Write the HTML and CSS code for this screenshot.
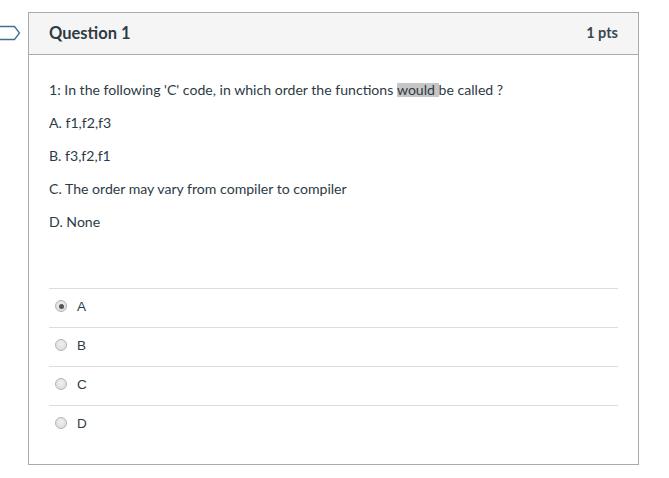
FILE: index.html
```html
<!DOCTYPE html>
<html>
<head>
<meta charset="utf-8">
<link rel="stylesheet" href="styles.css">
</head>
<body>
<svg class="flag" width="22" height="16" viewBox="0 0 22 16"><path d="M-1 1.5 H14.5 L19.5 8 L14.5 14.5 H-1" fill="none" stroke="#3f6f91" stroke-width="1.3"/></svg>
<div class="card">
  <div class="card-header">
    <span class="title">Question 1</span>
    <span class="pts">1 pts</span>
  </div>
  <div class="card-body">
    <p>1: In the following 'C' code, in which order the functions <span class="hl">would&nbsp;</span>be called ?</p>
    <p>A. f1,f2,f3</p>
    <p>B. f3,f2,f1</p>
    <p>C. The order may vary from compiler to compiler</p>
    <p>D. None</p>
  </div>
  <div class="answers">
    <div class="answer"><span class="radio checked"></span><span class="label">A</span></div>
    <div class="answer"><span class="radio"></span><span class="label">B</span></div>
    <div class="answer"><span class="radio"></span><span class="label">C</span></div>
    <div class="answer"><span class="radio"></span><span class="label">D</span></div>
  </div>
</div>
</body>
</html>
```
FILE: styles.css
```css
html, body {
  margin: 0;
  padding: 0;
  background: #fff;
}
body {
  position: relative;
  font-family: Lato, "Liberation Sans", sans-serif;
  color: #2d3b45;
}
.flag {
  position: absolute;
  left: 0;
  top: 25px;
}
.card {
  margin: 12px 0 0 28px;
  width: 609px;
  border: 1px solid #aaaaaa;
  padding-bottom: 20px;
}
.card-header {
  display: flex;
  justify-content: space-between;
  align-items: center;
  height: 41px;
  padding: 0 20px;
  background: #f5f5f5;
  border-bottom: 1px solid #aaaaaa;
}
.title {
  font-size: 16.5px;
  font-weight: 700;
  color: #2d3b45;
  margin-top: -1px;
}
.pts {
  font-size: 14.5px;
  font-weight: 700;
  color: #3a4750;
  margin-top: -3px;
}
.card-body {
  padding: 25px 20px 0 20px;
  font-size: 14.1px;
}
.card-body p {
  margin: 0 0 13px 0;
  line-height: 20px;
}
.card-body p:last-child {
  margin-bottom: 0;
}
.hl {
  background: #c6c6c6;
  display: inline-block;
  line-height: 13px;
  padding-bottom: 1px;
}
.answers {
  margin: 56px 20px 0 20px;
}
.answer {
  display: flex;
  align-items: center;
  border-top: 1px solid #dddddd;
  height: 20px;
  padding: 7px 0 11px 6px;
  font-family: "Liberation Sans", Arial, sans-serif;
  font-size: 13.5px;
  color: #2d3b45;
}
.radio {
  box-sizing: border-box;
  width: 12px;
  height: 12px;
  border-radius: 50%;
  border: 1px solid #b4b4b4;
  background: radial-gradient(circle at 50% 40%, #f0f0f0 0%, #d8d8d8 100%);
  display: flex;
  align-items: center;
  justify-content: center;
  margin-right: 10px;
}
.radio.checked::after {
  content: "";
  width: 5px;
  height: 5px;
  border-radius: 50%;
  background: #555;
}
```
